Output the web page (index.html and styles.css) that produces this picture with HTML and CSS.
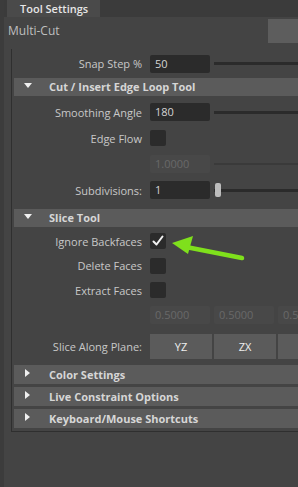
FILE: index.html
```html
<!DOCTYPE html>
<html lang="en">
<head>
    <meta charset="UTF-8">
    <meta name="viewport" content="width=device-width, initial-scale=1.0">
    <title>Tool Settings</title>
    <link rel="stylesheet" href="styles.css">
</head>
<body>
    <div class="tabbar">
        <div class="tab">Tool Settings</div>
    </div>
    <div class="panel">
        <div class="title-row">
            <span class="title">Multi-Cut</span>
            <div class="top-button"></div>
        </div>

        <div class="frame">
            <div class="row first-row">
                <label class="label">Snap Step %</label>
                <div class="field">50</div>
                <div class="track"></div>
            </div>

            <div class="section open">
                <span class="arrow-down"></span>Cut / Insert Edge Loop Tool
            </div>
            <div class="row">
                <label class="label">Smoothing Angle</label>
                <div class="field">180</div>
                <div class="track"></div>
            </div>
            <div class="row">
                <label class="label">Edge Flow</label>
                <div class="checkbox"></div>
            </div>
            <div class="row">
                <label class="label"></label>
                <div class="field disabled">1.0000</div>
                <div class="track thin"></div>
            </div>
            <div class="row">
                <label class="label">Subdivisions:</label>
                <div class="field">1</div>
                <div class="track">
                    <div class="handle"></div>
                </div>
            </div>

            <div class="section open second">
                <span class="arrow-down"></span>Slice Tool
            </div>
            <div class="row check-row">
                <label class="label">Ignore Backfaces</label>
                <div class="checkbox">
                    <svg width="16" height="16" viewBox="0 0 16 16">
                        <path d="M3.5 8.5 L6.5 11.5 L12.5 3.5" fill="none" stroke="#f2f2f2" stroke-width="2" stroke-linecap="round" stroke-linejoin="round"/>
                    </svg>
                </div>
            </div>
            <div class="row check-row">
                <label class="label">Delete Faces</label>
                <div class="checkbox"></div>
            </div>
            <div class="row check-row">
                <label class="label">Extract Faces</label>
                <div class="checkbox"></div>
            </div>
            <div class="row check-row">
                <label class="label"></label>
                <div class="field disabled">0.5000</div>
                <div class="field disabled">0.5000</div>
                <div class="field disabled">0.5000</div>
            </div>
            <div class="row button-row">
                <label class="label">Slice Along Plane:</label>
                <div class="button">YZ</div>
                <div class="button">ZX</div>
                <div class="button"></div>
            </div>

            <div class="section closed first-closed">
                <span class="arrow-right"></span>Color Settings
            </div>
            <div class="section closed">
                <span class="arrow-right"></span>Live Constraint Options
            </div>
            <div class="section closed">
                <span class="arrow-right"></span>Keyboard/Mouse Shortcuts
            </div>
        </div>
    </div>

    <svg class="pointer" width="298" height="487" viewBox="0 0 298 487">
        <line x1="186" y1="247" x2="242" y2="258" stroke="#7fe01c" stroke-width="4.5" stroke-linecap="round"/>
        <polygon points="172,243 193,236 188,254" fill="#7fe01c"/>
    </svg>
</body>
</html>
```

FILE: styles.css
```css
body {
    margin: 0;
    width: 298px;
    height: 487px;
    overflow: hidden;
    background: #444444;
    font-family: "Open Sans", "Liberation Sans", sans-serif;
    font-size: 11px;
    color: #c8c8c8;
    position: relative;
    border-left: 4px solid #3c3c3c;
    box-sizing: border-box;
}
.tabbar {
    height: 17px;
    background: #3b3b3b;
    display: flex;
    padding-left: 3px;
}
.tab {
    width: 93px;
    background: #4a4a4a;
    color: #e6e6e6;
    font-size: 11px;
    font-weight: 600;
    line-height: 17px;
    padding-left: 13px;
    box-sizing: border-box;
}
.title-row {
    height: 26px;
    display: flex;
    align-items: center;
    justify-content: space-between;
    padding-left: 4px;
}
.title {
    font-size: 12px;
    color: #bfbfbf;
}
.top-button {
    width: 30px;
    height: 24px;
    background: #5d5d5d;
    margin-top: 2px;
}
.frame {
    margin-top: 6px;
    margin-left: 7px;
    width: 400px;
    border-left: 1px solid #2f2f2f;
    border-bottom: 1px solid #2f2f2f;
    padding: 2px 0 3px 2px;
}
.row {
    height: 26px;
    display: flex;
    align-items: center;
    gap: 4px;
}
.first-row {
    height: 25px;
}
.label {
    width: 128px;
    flex-shrink: 0;
    text-align: right;
    margin-right: 4px;
    white-space: nowrap;
}
.field {
    width: 60px;
    height: 18px;
    flex-shrink: 0;
    background: #2b2b2b;
    border-radius: 2px;
    color: #d4d4d4;
    line-height: 18px;
    padding-left: 5px;
    box-sizing: border-box;
}
.field.disabled {
    background: #484848;
    color: #686868;
}
.track {
    flex: 1;
    height: 3px;
    background: #2b2b2b;
    position: relative;
}
.track.thin {
    height: 2px;
    background: #3a3a3a;
}
.handle {
    position: absolute;
    left: 1px;
    top: -6px;
    width: 6px;
    height: 14px;
    border-radius: 2px;
    background: #bdbdbd;
}
.checkbox {
    width: 16px;
    height: 16px;
    flex-shrink: 0;
    background: #2b2b2b;
    border-radius: 2px;
    display: flex;
}
.check-row {
    height: 24.5px;
}
.section {
    height: 18px;
    background: #5b5b5b;
    color: #d6d6d6;
    font-weight: 700;
    font-size: 11px;
    line-height: 18px;
    display: flex;
    align-items: center;
    padding-left: 10px;
    margin: 2px 0 3px;
}
.section.second {
    margin-top: 6px;
    margin-bottom: 2px;
}
.section.closed {
    height: 19px;
    margin: 3px 0 0;
}
.section.first-closed {
    margin-top: 6px;
}
.arrow-down {
    width: 0;
    height: 0;
    border-left: 4px solid transparent;
    border-right: 4px solid transparent;
    border-top: 5px solid #f0f0f0;
    margin-right: 17px;
    margin-top: -3px;
}
.arrow-right {
    width: 0;
    height: 0;
    border-top: 4px solid transparent;
    border-bottom: 4px solid transparent;
    border-left: 5px solid #f0f0f0;
    margin-left: 1px;
    margin-right: 19px;
    margin-top: -4px;
}
.button-row {
    height: 25px;
    margin-top: 7px;
    gap: 2px;
}
.button-row .label {
    margin-right: 6px;
}
.button {
    width: 62px;
    height: 25px;
    background: #5b5b5b;
    color: #eeeeee;
    text-align: center;
    line-height: 25px;
    flex-shrink: 0;
}
.pointer {
    position: absolute;
    left: -4px;
    top: 0;
}
```
